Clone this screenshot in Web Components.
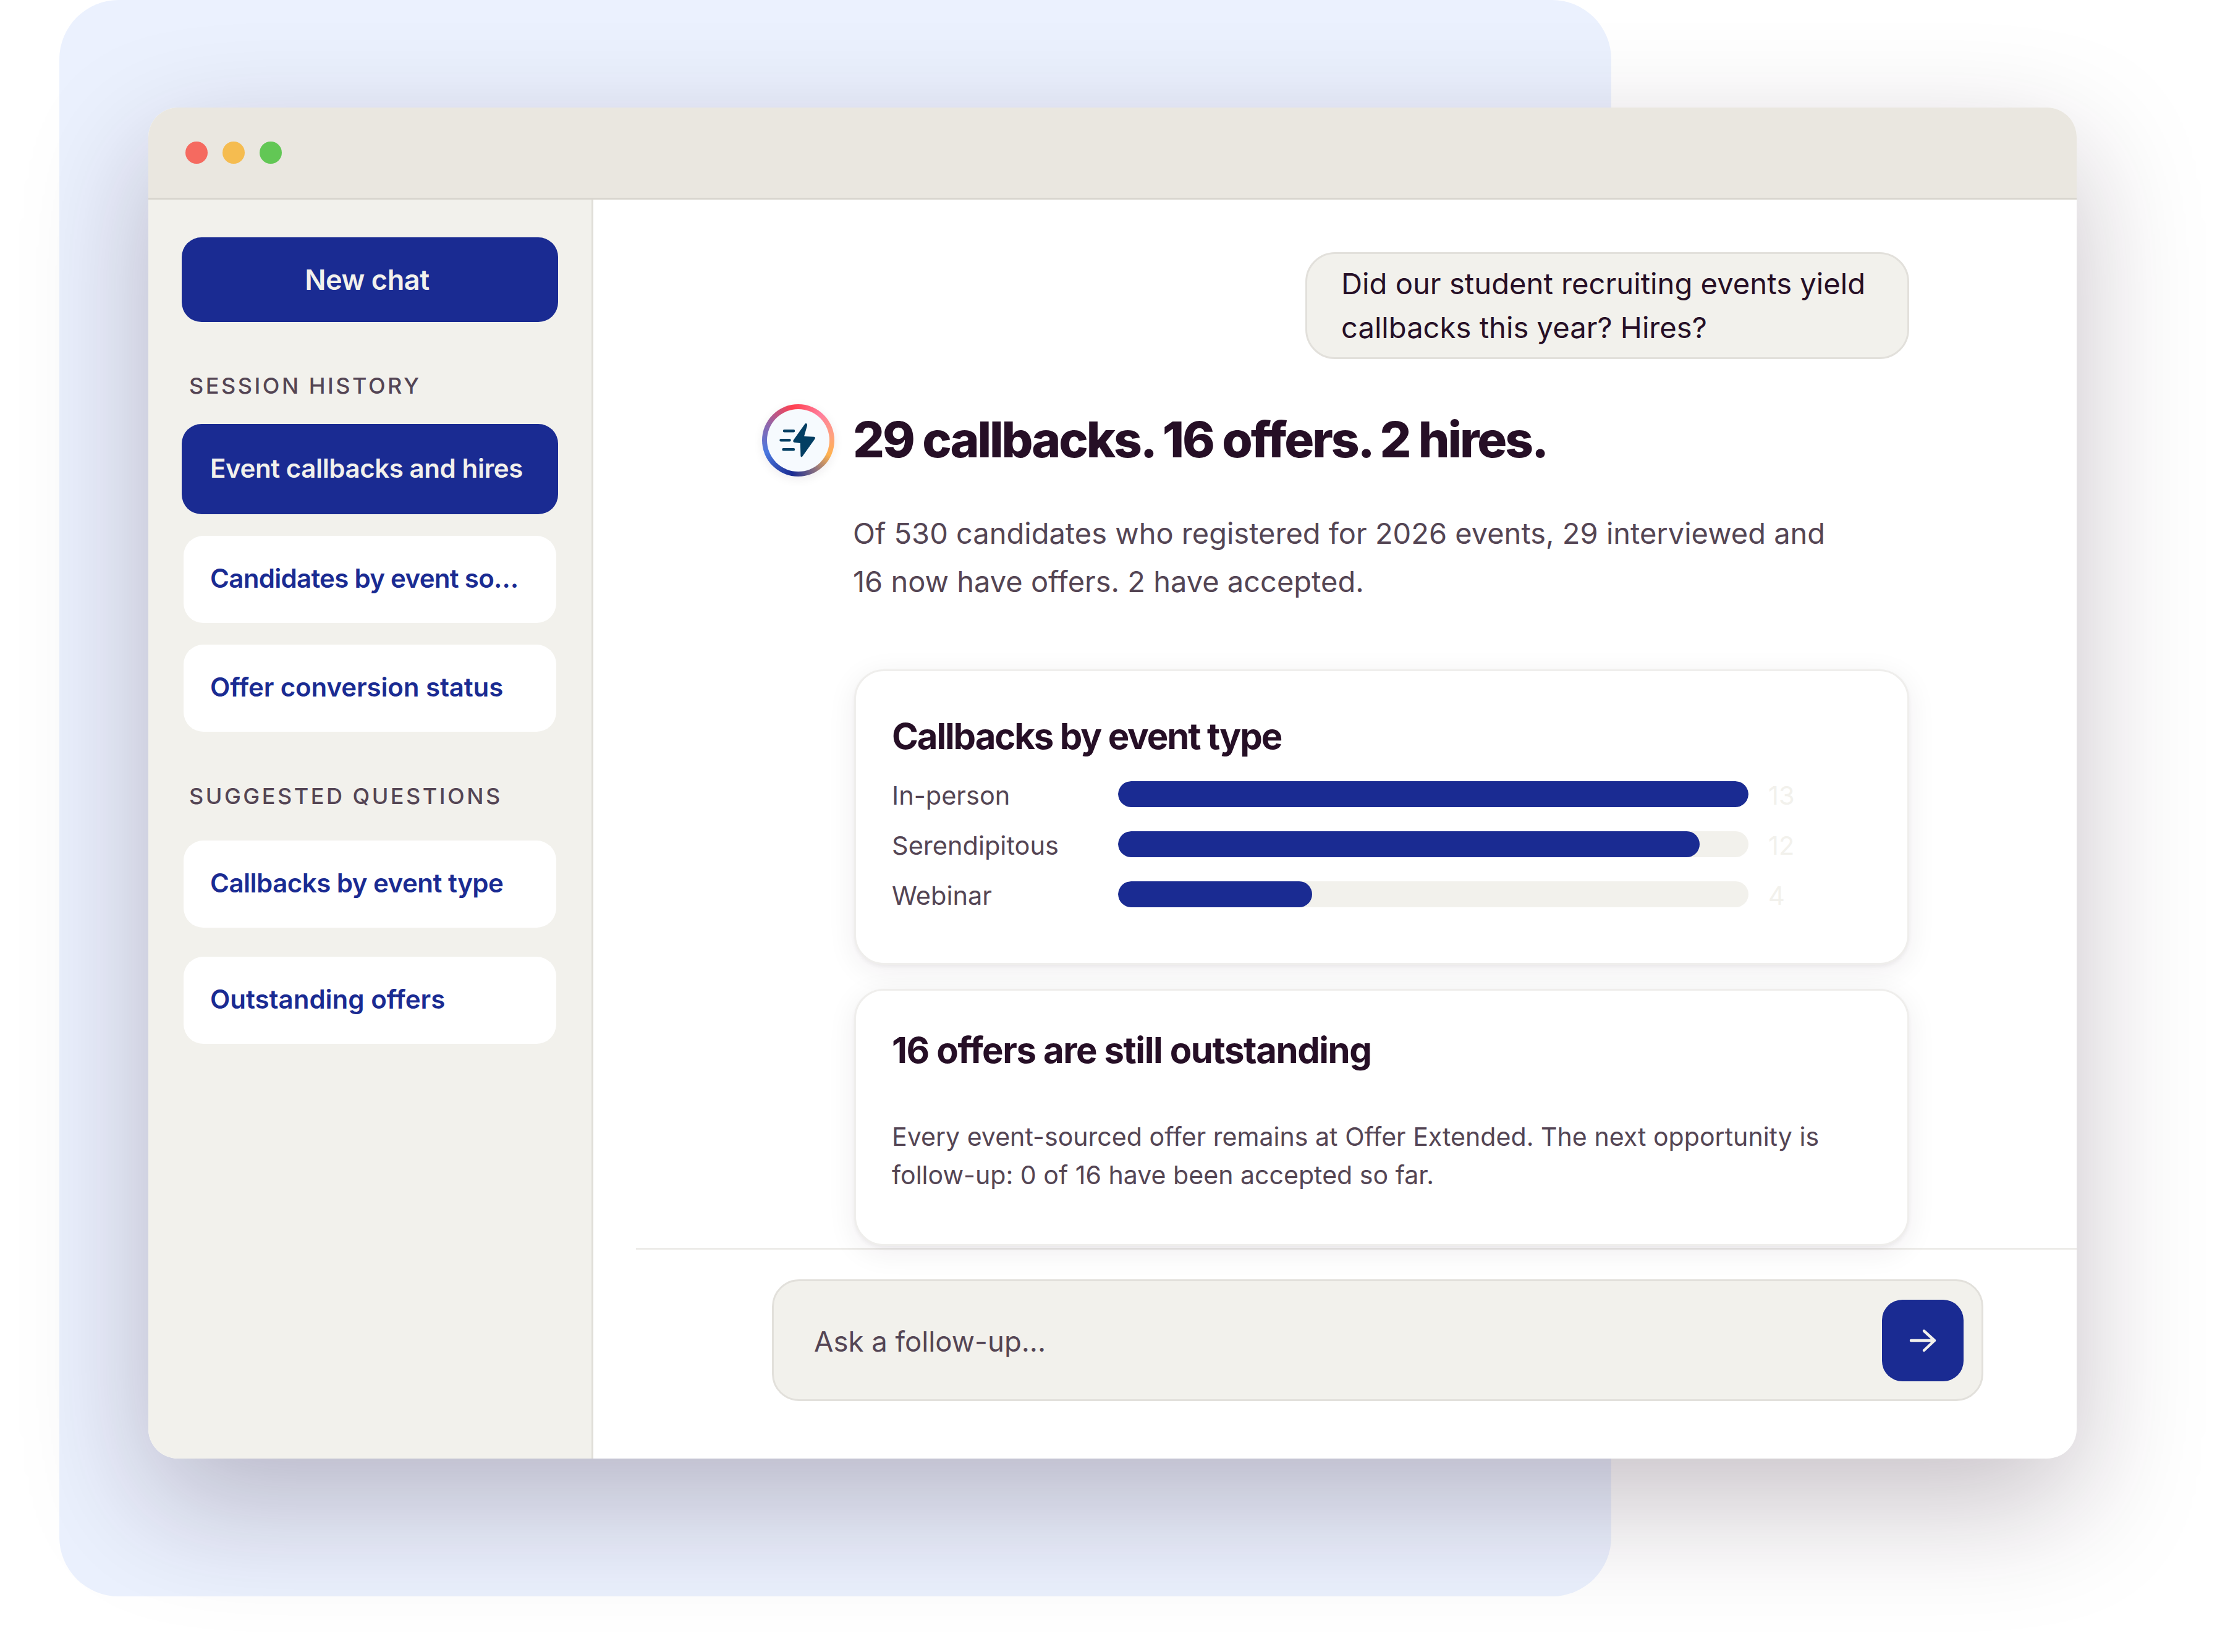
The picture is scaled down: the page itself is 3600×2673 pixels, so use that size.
<!DOCTYPE html>
<html lang="en">
<head>
<meta charset="utf-8">
<title>Event callbacks and hires</title>
<style>
  html, body { margin: 0; background: #fff; }
  body { font-family: "Inter", "Liberation Sans", sans-serif; color: #260f26; }
</style>
</head>
<body>
<hero-stage>
  <app-window>
    <side-bar slot="side">
      <new-chat-button>New chat</new-chat-button>
      <nav-section label="Session history" gap="35">
        <nav-item active>Event callbacks and hires</nav-item>
        <nav-item style="letter-spacing:-.7px">Candidates by event so…</nav-item>
        <nav-item style="letter-spacing:-.1px">Offer conversion status</nav-item>
      </nav-section>
      <nav-section label="Suggested questions" gap="47" style="--label-mt:82px;--label-mb:50px">
        <nav-item style="letter-spacing:-.5px">Callbacks by event type</nav-item>
        <nav-item style="letter-spacing:0">Outstanding offers</nav-item>
      </nav-section>
    </side-bar>
    <chat-thread>
      <chat-bubble>Did our student recruiting events yield callbacks this year? Hires?</chat-bubble>
      <answer-head>29 callbacks. 16 offers. 2 hires.</answer-head>
      <answer-text>Of 530 candidates who registered for 2026 events, 29 interviewed and 16 now have offers. 2 have accepted.</answer-text>
      <chart-card heading="Callbacks by event type">
        <bar-row label="In-person" value="13" pct="100"></bar-row>
        <bar-row label="Serendipitous" value="12" pct="92.3"></bar-row>
        <bar-row label="Webinar" value="4" pct="30.8"></bar-row>
      </chart-card>
      <note-card heading="16 offers are still outstanding">Every event-sourced offer remains at Offer Extended. The next opportunity is follow-up: 0 of 16 have been accepted so far.</note-card>
    </chat-thread>
    <chat-composer placeholder="Ask a follow-up..."></chat-composer>
  </app-window>
</hero-stage>

<script>
class HeroStage extends HTMLElement {
  constructor() {
    super();
    this.attachShadow({ mode: 'open' });
    this.shadowRoot.innerHTML = `
      <style>
        :host { display: block; position: relative; width: 3600px; height: 2673px; overflow: hidden; background: #fff; box-sizing: border-box; padding: 174px 240px 0; }
        .panel { position: absolute; left: 96px; top: 0; width: 2511px; height: 2583px; border-radius: 96px; background: #ebf1fe; }
        .front { position: relative; }
      </style>
      <div class="panel"></div>
      <div class="front"><slot></slot></div>
    `;
  }
}

class AppWindow extends HTMLElement {
  constructor() {
    super();
    this.attachShadow({ mode: 'open' });
    this.shadowRoot.innerHTML = `
      <style>
        :host { display: flex; flex-direction: column; width: 3120px; height: 2186px; border-radius: 48px; background: #fff; box-shadow: 0 72px 200px rgba(38, 15, 38, .26); }
        .bar { flex: none; box-sizing: border-box; height: 149px; display: flex; align-items: center; gap: 24px; padding: 0 0 0 60px; background: #eae7e0; border-bottom: 3px solid #d9d6cf; border-radius: 48px 48px 0 0; }
        .dot { width: 36px; height: 36px; border-radius: 50%; }
        .body { flex: 1; min-height: 0; display: flex; }
        .main { flex: 1; min-width: 0; display: flex; flex-direction: column; }
      </style>
      <div class="bar">
        <span class="dot" style="background:#f56a60"></span>
        <span class="dot" style="background:#f5bc50"></span>
        <span class="dot" style="background:#62c755"></span>
      </div>
      <div class="body">
        <slot name="side"></slot>
        <div class="main"><slot></slot></div>
      </div>
    `;
  }
}

class SideBar extends HTMLElement {
  constructor() {
    super();
    this.attachShadow({ mode: 'open' });
    this.shadowRoot.innerHTML = `
      <style>
        :host { flex: none; display: flex; flex-direction: column; box-sizing: border-box; width: 720px; padding: 61px 54px 0; background: #f2f1ec; border-right: 3px solid #e0ded8; border-radius: 0 0 0 48px; }
      </style>
      <slot></slot>
    `;
  }
}

class NewChatButton extends HTMLElement {
  constructor() {
    super();
    this.attachShadow({ mode: 'open' });
    this.shadowRoot.innerHTML = `
      <style>
        :host { display: flex; align-items: center; justify-content: center; height: 137px; padding-right: 9px; border-radius: 32px; background: #1a2b92; color: #f2f1ec; font: 600 45px "Inter", sans-serif; letter-spacing: -.4px; }
      </style>
      <slot></slot>
    `;
  }
}

class NavSection extends HTMLElement {
  connectedCallback() {
    if (this.shadowRoot) return;
    this.attachShadow({ mode: 'open' });
    this.shadowRoot.innerHTML = `
      <style>
        :host { display: block; }
        .label { margin: var(--label-mt, 81px) 0 var(--label-mb, 40px) 12px; height: 44px; font: 500 36px/44px "Inter", sans-serif; letter-spacing: 3.5px; text-transform: uppercase; color: #544554; }
        .list { display: flex; flex-direction: column; gap: ${this.getAttribute('gap') || 35}px; }
      </style>
      <div class="label">${this.getAttribute('label')}</div>
      <div class="list"><slot></slot></div>
    `;
  }
}

class NavItem extends HTMLElement {
  constructor() {
    super();
    this.attachShadow({ mode: 'open' });
    this.shadowRoot.innerHTML = `
      <style>
        :host { display: flex; align-items: center; box-sizing: border-box; height: 141px; margin: 0 3px; padding: 0 0 4px 43px; border-radius: 32px; background: #fff; color: #1a2b92; font: 600 42px "Inter", sans-serif; letter-spacing: -.4px; white-space: nowrap; }
        :host([active]) { height: 146px; margin: 0; padding-left: 46px; background: #1a2b92; color: #f2f1ec; }
      </style>
      <slot></slot>
    `;
  }
}

class ChatThread extends HTMLElement {
  constructor() {
    super();
    this.attachShadow({ mode: 'open' });
    this.shadowRoot.innerHTML = `
      <style>
        :host { flex: none; display: flex; flex-direction: column; box-sizing: border-box; height: 1699px; margin-left: 69px; padding: 85px 271px 0 204px; border-bottom: 3px solid #ecebe8; }
      </style>
      <slot></slot>
    `;
  }
}

class ChatBubble extends HTMLElement {
  constructor() {
    super();
    this.attachShadow({ mode: 'open' });
    this.shadowRoot.innerHTML = `
      <style>
        :host { display: block; align-self: flex-end; box-sizing: border-box; width: 977px; padding: 12px 55px 13px; border: 3px solid #e2e0db; border-radius: 48px; background: #f2f1ec; color: #260f26; font: 400 47.200px/71px "Inter", sans-serif; }
      </style>
      <slot></slot>
    `;
  }
}

class AnswerHead extends HTMLElement {
  constructor() {
    super();
    this.attachShadow({ mode: 'open' });
    this.shadowRoot.innerHTML = `
      <style>
        :host { display: flex; align-items: center; gap: 30px; margin-top: 73px; color: #260f26; font: 800 80px/117px "Inter", sans-serif; letter-spacing: -3.1px; }
        .logo { flex: none; width: 117px; height: 117px; box-sizing: border-box; padding: 8px; border-radius: 50%; box-shadow: 0 4px 16px rgba(38, 15, 38, .08); background: conic-gradient(from 0deg, #ff4a5c 0deg, #ff7d9c 40deg, #ffa080 80deg, #ffb24e 115deg, #8a7080 150deg, #1a2b92 190deg, #4a78e0 250deg, #8a68b0 295deg, #ff4050 350deg, #ff4a5c 360deg); }
        .inner { display: block; width: 101px; height: 101px; border-radius: 50%; background: #f6fafe; }
        .text { position: relative; top: -2px; }
      </style>
      <span class="logo">
        <svg class="inner" viewBox="0 0 101 101" fill="none">
          <path d="M28 35.300H43M22.500 50.300H36.500M26.500 65.300H43" stroke="#023e63" stroke-width="4.4" stroke-linecap="round"/>
          <path d="M61.500 23.800 42.800 50C41.600 52 42.500 53.500 44.500 53.900L53.800 55 54.400 75.500C54.500 77.600 56.300 78 57.300 76.600L77.400 48.200C78.600 46.400 77.800 45 75.800 44.800L60 43.900 65 26.800C65.600 23.600 63 22 61.500 23.800Z" fill="#023e63"/>
        </svg>
      </span>
      <span class="text"><slot></slot></span>
    `;
  }
}

class AnswerText extends HTMLElement {
  constructor() {
    super();
    this.attachShadow({ mode: 'open' });
    this.shadowRoot.innerHTML = `
      <style>
        :host { display: block; max-width: 1600px; margin: 53px 0 103px 147px; color: #544554; font: 400 47px/78px "Inter", sans-serif; }
      </style>
      <slot></slot>
    `;
  }
}

class ChartCard extends HTMLElement {
  connectedCallback() {
    if (this.shadowRoot) return;
    this.attachShadow({ mode: 'open' });
    this.shadowRoot.innerHTML = `
      <style>
        :host { display: block; box-sizing: border-box; height: 478px; margin-left: 149px; padding: 70px 58px 0; border: 3px solid #efeeec; border-radius: 48px; background: #fff; box-shadow: 0 10px 48px rgba(38, 15, 38, .07), 0 3px 6px rgba(38, 15, 38, .05); }
        h3 { margin: 0 0 38px; color: #260f26; font: 700 58px/70px "Inter", sans-serif; letter-spacing: -2.1px; }
        .rows { display: flex; flex-direction: column; gap: 39px; }
      </style>
      <h3>${this.getAttribute('heading')}</h3>
      <div class="rows"><slot></slot></div>
    `;
  }
}

class BarRow extends HTMLElement {
  connectedCallback() {
    if (this.shadowRoot) return;
    this.attachShadow({ mode: 'open' });
    this.shadowRoot.innerHTML = `
      <style>
        :host { display: grid; grid-template-columns: 334px 1020px auto; column-gap: 32px; align-items: center; height: 42px; font: 400 41.500px/42px "Inter", sans-serif; color: #544554; }
        .track { height: 42px; border-radius: 21px; background: #f2f1ec; overflow: hidden; }
        .fill { height: 100%; border-radius: 21px; background: #1a2b92; }
        .label, .num { position: relative; top: 2px; }
        .num { color: #f2f1ec; }
      </style>
      <span class="label">${this.getAttribute('label')}</span>
      <div class="track"><div class="fill" style="width:${this.getAttribute('pct')}%"></div></div>
      <span class="num">${this.getAttribute('value')}</span>
    `;
  }
}

class NoteCard extends HTMLElement {
  connectedCallback() {
    if (this.shadowRoot) return;
    this.attachShadow({ mode: 'open' });
    this.shadowRoot.innerHTML = `
      <style>
        :host { display: block; box-sizing: border-box; height: 416px; margin: 39px 0 0 149px; padding: 61px 58px 0; border: 3px solid #efeeec; border-radius: 48px; background: #fff; box-shadow: 0 10px 48px rgba(38, 15, 38, .07), 0 3px 6px rgba(38, 15, 38, .05); }
        h3 { margin: 0 0 74px; color: #260f26; font: 700 58px/70px "Inter", sans-serif; letter-spacing: -1.4px; }
        p { margin: 0; color: #544554; font: 400 41.100px/62px "Inter", sans-serif; }
      </style>
      <h3>${this.getAttribute('heading')}</h3>
      <p><slot></slot></p>
    `;
  }
}

class ChatComposer extends HTMLElement {
  connectedCallback() {
    if (this.shadowRoot) return;
    this.attachShadow({ mode: 'open' });
    this.shadowRoot.innerHTML = `
      <style>
        :host { flex: none; display: flex; align-items: center; justify-content: space-between; box-sizing: border-box; height: 197px; margin: 48px 151px 0 289px; padding: 0 29px 0 65px; border: 3px solid #e2e0db; border-radius: 44px; background: #f2f1ec; color: #544554; font: 400 45.500px "Inter", sans-serif; }
        .hint { position: relative; top: 2px; }
        .send { width: 132px; height: 132px; display: flex; align-items: center; justify-content: center; border-radius: 33px; background: #1a2b92; }
      </style>
      <span class="hint">${this.getAttribute('placeholder')}</span>
      <span class="send">
        <svg width="60" height="60" viewBox="0 0 60 60" fill="none" stroke="#f2f1ec" stroke-width="4.400" stroke-linecap="round" stroke-linejoin="round">
          <path d="M11 30H49M32 14.500 49 30 32 46"/>
        </svg>
      </span>
    `;
  }
}

customElements.define('hero-stage', HeroStage);
customElements.define('app-window', AppWindow);
customElements.define('side-bar', SideBar);
customElements.define('new-chat-button', NewChatButton);
customElements.define('nav-section', NavSection);
customElements.define('nav-item', NavItem);
customElements.define('chat-thread', ChatThread);
customElements.define('chat-bubble', ChatBubble);
customElements.define('answer-head', AnswerHead);
customElements.define('answer-text', AnswerText);
customElements.define('chart-card', ChartCard);
customElements.define('bar-row', BarRow);
customElements.define('note-card', NoteCard);
customElements.define('chat-composer', ChatComposer);
</script>
</body>
</html>
